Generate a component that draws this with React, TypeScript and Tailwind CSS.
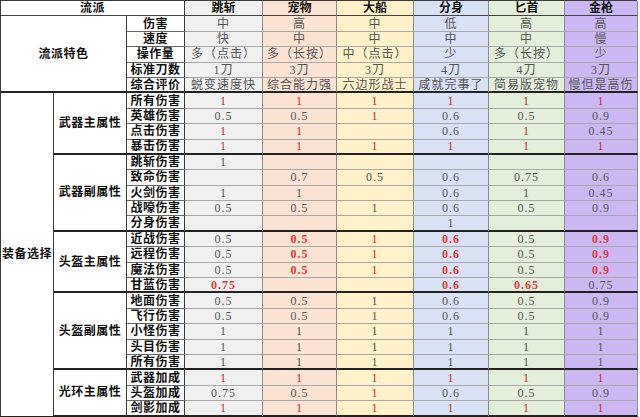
import type { ReactNode } from "react";

type Cell = string;

const BUILDS = ["跳斩", "宠物", "大船", "分身", "匕首", "金枪"];
const COL_BG = [
  "bg-[#f0f0f0]",
  "bg-[#fbe3d3]",
  "bg-[#fff2ca]",
  "bg-[#d9e1f5]",
  "bg-[#e3efda]",
  "bg-[#cbb8f3]",
];

const TRAITS: [string, Cell[]][] = [
  ["伤害", ["中", "高", "中", "低", "高", "高"]],
  ["速度", ["快", "中", "中", "中", "中", "慢"]],
  ["操作量", ["多（点击）", "多（长按）", "中（点击）", "少", "多（长按）", "少"]],
  ["标准刀数", ["1刀", "3刀", "3刀", "4刀", "4刀", "3刀"]],
  ["综合评价", ["蜕变速度快", "综合能力强", "六边形战士", "咸就完事了", "简易版宠物", "慢但是高伤"]],
];

// "*" = red, "!" = bold red
const GROUPS: { name: string; span: string; rows: [string, Cell[]][] }[] = [
  {
    name: "武器主属性",
    span: "row-span-4",
    rows: [
      ["所有伤害", ["*1", "*1", "*1", "*1", "*1", "*1"]],
      ["英雄伤害", ["0.5", "0.5", "*1", "0.6", "0.5", "0.9"]],
      ["点击伤害", ["*1", "*1", "", "0.6", "*1", "0.45"]],
      ["暴击伤害", ["*1", "*1", "*1", "*1", "*1", "*1"]],
    ],
  },
  {
    name: "武器副属性",
    span: "row-span-5",
    rows: [
      ["跳斩伤害", ["1", "", "", "", "", ""]],
      ["致命伤害", ["", "0.7", "0.5", "0.6", "0.75", "0.6"]],
      ["火剑伤害", ["1", "1", "", "0.6", "1", "0.45"]],
      ["战嚎伤害", ["0.5", "0.5", "1", "0.6", "0.5", "0.9"]],
      ["分身伤害", ["", "", "", "1", "", ""]],
    ],
  },
  {
    name: "头盔主属性",
    span: "row-span-4",
    rows: [
      ["近战伤害", ["0.5", "!0.5", "*1", "!0.6", "0.5", "!0.9"]],
      ["远程伤害", ["0.5", "!0.5", "*1", "!0.6", "0.5", "!0.9"]],
      ["魔法伤害", ["0.5", "!0.5", "*1", "!0.6", "0.5", "!0.9"]],
      ["甘蓝伤害", ["!0.75", "", "", "!0.6", "!0.65", "0.75"]],
    ],
  },
  {
    name: "头盔副属性",
    span: "row-span-5",
    rows: [
      ["地面伤害", ["0.5", "0.5", "1", "0.6", "0.5", "0.9"]],
      ["飞行伤害", ["0.5", "0.5", "1", "0.6", "0.5", "0.9"]],
      ["小怪伤害", ["1", "1", "1", "1", "1", "1"]],
      ["头目伤害", ["1", "1", "1", "1", "1", "1"]],
      ["所有伤害", ["1", "1", "1", "1", "1", "1"]],
    ],
  },
  {
    name: "光环主属性",
    span: "row-span-3",
    rows: [
      ["武器加成", ["*1", "*1", "*1", "*1", "*1", "*1"]],
      ["头盔加成", ["0.75", "0.5", "*1", "0.6", "0.5", "0.9"]],
      ["剑影加成", ["*1", "*1", "*1", "*1", "*1", "*1"]],
    ],
  },
];

function Label({ children, className = "" }: { children: ReactNode; className?: string }) {
  return (
    <div
      className={`flex items-center justify-center border-r border-b border-r-[#3a3a3a] bg-white font-bold tracking-[0.5px] text-[#111] ${className}`}
    >
      {children}
    </div>
  );
}

function Value({ v, col, last }: { v: Cell; col: number; last?: boolean }) {
  let text = v;
  let tone = "text-[#555]";
  if (v.startsWith("*")) {
    text = v.slice(1);
    tone = "text-[#cc2a2a]";
  } else if (v.startsWith("!")) {
    text = v.slice(1);
    tone = "text-[#e03a3a] font-bold";
  }
  return (
    <div
      className={`flex items-center justify-center border-r border-b border-r-[#8c8c8c] tracking-[1px] ${COL_BG[col]} ${tone} ${
        last ? "border-b-2 border-b-[#222]" : "border-b-[#a8a8a8]"
      }`}
    >
      {text}
    </div>
  );
}

export default function App() {
  return (
    <div className="h-[417px] w-[640px] overflow-hidden bg-white">
      <div className="grid w-[637px] auto-rows-[15.4px] grid-cols-[53px_73px_58px_78px_74px_77px_75px_76px_73px] border-t border-l border-[#3a3a3a] text-[12px] leading-none [font-family:'Liberation_Serif','Noto_Sans_CJK_SC',serif]">
        <Label className="col-span-3 border-b-[#444]">流派</Label>
        {BUILDS.map((b, i) => (
          <div
            key={b}
            className={`flex items-center justify-center border-r border-b border-r-[#8c8c8c] border-b-[#444] font-bold text-[#111] ${COL_BG[i]}`}
          >
            {b}
          </div>
        ))}

        <Label className="col-span-2 row-span-5 border-b-2 border-b-[#222]">流派特色</Label>
        {TRAITS.map(([name, vals], r) => {
          const last = r === TRAITS.length - 1;
          return [
            <Label
              key={name}
              className={last ? "border-b-2 border-b-[#222]" : "border-b-[#666]"}
            >
              {name}
            </Label>,
            ...vals.map((v, c) => <Value key={name + c} v={v} col={c} last={last} />),
          ];
        })}

        <Label className="row-span-21 border-b-[#222]">装备选择</Label>
        {GROUPS.map((g) =>
          g.rows.map(([name, vals], r) => {
            const last = r === g.rows.length - 1;
            return [
              r === 0 ? (
                <Label key={g.name} className={`${g.span} border-b-2 border-b-[#222]`}>
                  {g.name}
                </Label>
              ) : null,
              <Label
                key={g.name + name}
                className={last ? "border-b-2 border-b-[#222]" : "border-b-[#666]"}
              >
                {name}
              </Label>,
              ...vals.map((v, c) => (
                <Value key={g.name + name + c} v={v} col={c} last={last} />
              )),
            ];
          })
        )}
      </div>
    </div>
  );
}
